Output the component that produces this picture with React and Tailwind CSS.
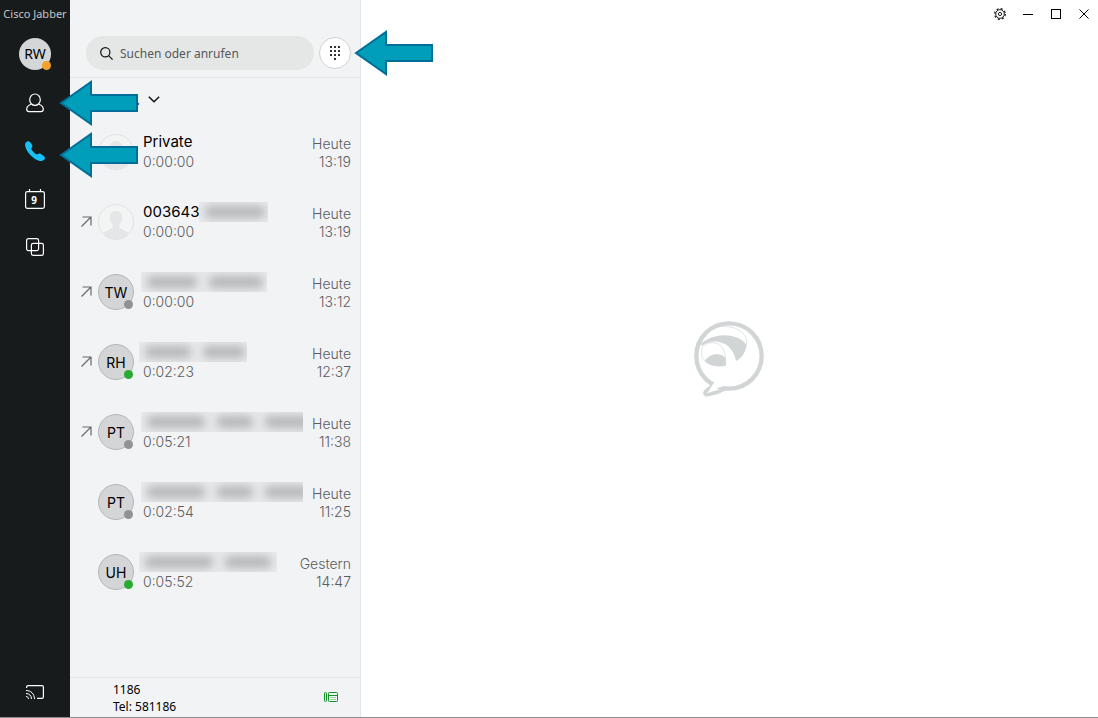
import React from 'react';
import clsx from 'clsx';

const calls = [
  { id: 1, name: 'Private', duration: '0:00:00', day: 'Heute', time: '13:19' },
  { id: 2, name: '003643', redacted: ['w-[60px]'], box: 'w-[69px]', outgoing: true, duration: '0:00:00', day: 'Heute', time: '13:19' },
  { id: 3, initials: 'TW', status: 'away', redacted: ['w-[50px]', 'w-[54px]'], box: 'w-[126px] -ml-0.5', outgoing: true, duration: '0:00:00', day: 'Heute', time: '13:12' },
  { id: 4, initials: 'RH', status: 'online', redacted: ['w-[46px]', 'w-[42px]'], box: 'w-[108px] -ml-1', outgoing: true, duration: '0:02:23', day: 'Heute', time: '12:37' },
  { id: 5, initials: 'PT', status: 'away', redacted: ['w-[58px]', 'w-[36px]', 'w-[46px]'], box: 'w-[162px] -ml-0.5', outgoing: true, duration: '0:05:21', day: 'Heute', time: '11:38' },
  { id: 6, initials: 'PT', status: 'away', redacted: ['w-[58px]', 'w-[36px]', 'w-[46px]'], box: 'w-[162px] -ml-0.5', duration: '0:02:54', day: 'Heute', time: '11:25' },
  { id: 7, initials: 'UH', status: 'online', redacted: ['w-[68px]', 'w-[46px]'], box: 'w-[138px] -ml-1', duration: '0:05:52', day: 'Gestern', time: '14:47' },
];

function Pointer({ className }) {
  return (
    <svg viewBox="0 0 80 46" className={clsx('absolute w-[80px] h-[46px] pointer-events-none', className)} aria-hidden="true">
      <path d="M2 23 32 2v13h46v16H32v13z" fill="#009eb8" stroke="#006e99" strokeWidth="2" />
    </svg>
  );
}

function NavButton({ label, children }) {
  return (
    <button type="button" aria-label={label} className="flex h-12 w-full items-center justify-center text-white">
      {children}
    </button>
  );
}

function Sidebar() {
  return (
    <nav className="flex w-[70px] shrink-0 flex-col bg-[#171b1c]">
      <div className="h-7 pt-1.5 text-center text-[11px] leading-4 whitespace-nowrap text-[#c4c6c6]">Cisco Jabber</div>
      <div className="flex h-[51px] items-center justify-center">
        <button type="button" className="relative flex h-8 w-8 items-center justify-center rounded-full bg-[#d4d6d7] text-sm text-black">
          RW
          <span className="absolute right-0 bottom-0 h-[9px] w-[9px] rounded-full bg-[#f4a12b]" />
        </button>
      </div>
      <NavButton label="Kontakte">
        <svg viewBox="0 0 20 20" className="h-5 w-5" fill="none" stroke="currentColor" strokeWidth="1.2">
          <ellipse cx="10" cy="6.7" rx="5.3" ry="5.7" />
          <path d="M6.2 11.2C3.6 12 1.7 13.6 1.7 16.2c0 1.7.8 2.4 2.4 2.4h11.8c1.6 0 2.4-.7 2.4-2.4 0-2.6-1.9-4.2-4.5-5" />
        </svg>
      </NavButton>
      <NavButton label="Anrufe">
        <svg viewBox="0 0 20 20" className="h-5 w-5" fill="#17c1f5">
          <path d="M1.2.9C2.6-.2 4.3 0 5.2 1.2L7 3.8c.7 1.1.5 2-.3 2.9-.6.7-.5 1.2 0 2 .9 1.5 2.7 3.3 4.2 4.3.8.5 1.3.6 2 .1 1-.7 2-.8 3-.1l2.9 1.9c1.4.9 1.5 2.6.4 3.8-1.2 1.3-3.2 1.7-5.3 1C7.6 17.6 1.9 11.5.3 5.5-.2 3.5.1 1.8 1.2.9z" />
        </svg>
      </NavButton>
      <NavButton label="Besprechungen">
        <svg viewBox="0 0 20 20" className="h-5 w-5" fill="none" stroke="currentColor" strokeWidth="1.2">
          <rect x=".6" y="2.6" width="18.8" height="16.8" rx="1.8" />
          <path d="M4.5 0v2.6M15.5 0v2.6" />
          <text x="9" y="14.5" textAnchor="middle" fontSize="10" fontWeight="700" fill="currentColor" stroke="none">9</text>
        </svg>
      </NavButton>
      <NavButton label="Fenster">
        <svg viewBox="0 0 18 18" className="h-[18px] w-[18px]" fill="none" stroke="currentColor" strokeWidth="1.2">
          <rect x=".6" y=".6" width="12" height="12" rx="1.8" />
          <rect x="5.4" y="5.4" width="12" height="12" rx="1.8" />
        </svg>
      </NavButton>
      <div className="mt-auto pb-px">
        <NavButton label="Bildschirm freigeben">
          <svg viewBox="0 0 18 14" className="h-[14px] w-[18px]" fill="none" stroke="currentColor" strokeWidth="1.2">
            <path d="M.6 3V2C.6 1.1 1.1.6 2 .6h14c.9 0 1.4.5 1.4 1.4v10c0 .9-.5 1.4-1.4 1.4h-5" />
            <path d="M0 5.5c5 0 8.500 3.500 8.500 8.500M0 8.500c3.300 0 5.500 2.200 5.500 5.500M0 11.500c1.500 0 2.500 1 2.500 2.500" strokeWidth="1" />
          </svg>
        </NavButton>
      </div>
    </nav>
  );
}

function Avatar({ initials, status }) {
  if (!initials) {
    return (
      <svg viewBox="0 0 36 36" className="h-9 w-9 shrink-0">
        <circle cx="18" cy="18" r="17.5" fill="#f3f4f4" stroke="#e0e1e2" />
        <path d="M18 7c4 0 6.2 2.6 6.2 6.5 0 3-1 5.3-2.7 7-.6 3.5 1 4.4 4.2 5.6 2.2.8 3.8 1.8 4.8 3.4A17 17 0 0 1 18 35 17 17 0 0 1 5.500 29.500c1-1.600 2.600-2.600 4.800-3.400 3.200-1.200 4.800-2.100 4.200-5.600-1.700-1.700-2.700-4-2.700-7C11.800 9.600 14 7 18 7z" fill="#e5e6e7" />
      </svg>
    );
  }
  return (
    <div className="relative flex h-9 w-9 shrink-0 items-center justify-center rounded-full border border-[#b4b6b8] bg-[#d4d5d7] text-[14px] font-normal text-black">
      {initials}
      <span
        className={clsx(
          'absolute right-0 bottom-0 h-[9px] w-[9px] rounded-full',
          status === 'online' ? 'bg-[#27ab30]' : 'bg-[#8f9395]'
        )}
      />
    </div>
  );
}

// Unkenntlich gemachter Name
function Redacted({ parts, box }) {
  return (
    <span className={clsx('flex h-5 items-center gap-3 overflow-hidden bg-[#e9eaeb] pl-1.5', box)}>
      {parts.map((width, i) => (
        <span key={i} className={clsx('h-3 shrink-0 rounded bg-[#b4b5b7] blur-[5px]', width)} />
      ))}
    </span>
  );
}

function CallRow({ call }) {
  return (
    <li className="flex h-[70px] items-center pr-[9px] pl-[11px] font-[Inter,sans-serif]">
      <div className="w-[17px] shrink-0 pb-0.5">
        {call.outgoing && (
          <svg viewBox="0 0 11 11" className="h-[11px] w-[11px]" fill="none" stroke="#66696b" strokeWidth="1.2">
            <path d="M.5 10.5 10 1M1.5 1H10v8.5" />
          </svg>
        )}
      </div>
      <Avatar initials={call.initials} status={call.status} />
      <div className="ml-[9px] min-w-0 flex-1 pb-px">
        <div className="flex h-[21px] items-center text-[15px] leading-5 text-black">
          {call.name}
          {call.redacted && <Redacted parts={call.redacted} box={call.box} />}
        </div>
        <div className="text-[14px] leading-5 font-[350] text-[#5a5c5e]">{call.duration}</div>
      </div>
      <div className="pt-0.5 text-right text-[14px] leading-[18px] font-[350] text-[#5a5c5e]">
        <div>{call.day}</div>
        <div>{call.time}</div>
      </div>
    </li>
  );
}

function CallPanel() {
  return (
    <section className="flex w-[291px] shrink-0 flex-col border-r border-[#e3e4e5] bg-[#f2f3f5]">
      <div className="flex h-[78px] items-end gap-[5px] border-b border-[#e5e6e8] pr-[9px] pb-[7px] pl-4">
        <label className="flex h-[34px] min-w-0 flex-1 items-center gap-[7px] rounded-full bg-[#e5e7e6] pl-[14px]">
          <svg viewBox="0 0 13 13" className="h-[13px] w-[13px] shrink-0" fill="none" stroke="#111" strokeWidth="1.2">
            <circle cx="5.3" cy="5.3" r="4.6" />
            <path d="m8.6 8.6 4 4" />
          </svg>
          <input type="text" aria-label="Suchen oder anrufen" placeholder="Suchen oder anrufen" className="w-full min-w-0 bg-transparent pt-0.5 text-[12px] leading-5 outline-none placeholder:text-[#555859]" />
        </label>
        <button type="button" aria-label="Wähltastatur" className="mb-px flex h-8 w-8 items-center justify-center rounded-full border border-[#cfd1d2] bg-white">
          <svg viewBox="0 0 10 14" className="h-[14px] w-[10px]" fill="#333">
            {[0, 4, 8].map((y) => [0, 4, 8].map((x) => <rect key={`${x}-${y}`} x={x} y={y} width="2" height="2" />))}
            <rect x="4" y="12" width="2" height="2" />
          </svg>
        </button>
      </div>
      <button type="button" className="flex h-[39px] items-center gap-2 pt-1.5 pl-4 text-left font-[Inter,sans-serif] text-[15px] text-[#111]">
        <span className="w-[54px] text-right font-medium">Alle ...</span>
        <svg viewBox="0 0 12 7" className="mb-0.5 h-[7px] w-3" fill="none" stroke="#111" strokeWidth="1.5">
          <path d="m.8.8 5.2 5 5.2-5" />
        </svg>
      </button>
      <ul>
        {calls.map((call) => (
          <CallRow key={call.id} call={call} />
        ))}
      </ul>
      <footer className="mt-auto flex h-10 items-center justify-between border-t border-[#e5e6e8] pr-[22px] pl-[43px] text-[12px] leading-[17px] text-black">
        <div>
          <div>1186</div>
          <div>Tel: 581186</div>
        </div>
        <button type="button" aria-label="Tischtelefon" className="pb-0.5">
          <svg viewBox="0 0 14 10" className="h-[10px] w-[14px]" fill="none" stroke="#16912a">
            <rect x=".5" y=".5" width="2" height="9" rx=".8" />
            <rect x="4.5" y=".5" width="9" height="9" rx=".8" />
            <path d="M4.5 3.5h9" />
            <path d="M6 5.5h6M6 7.5h6" stroke="#9fd0a8" />
          </svg>
        </button>
      </footer>
    </section>
  );
}

function JabberLogo() {
  return (
    <svg viewBox="42 32 213 228" className="h-[76px] w-[71px]" fill="none" aria-label="Jabber">
      <path d="M100 224c-6 8-15 9-23 20-6 8 2 11 12 8 18-4 34-10 48-18" stroke="#d2d5d6" strokeWidth="11" strokeLinejoin="round" />
      <circle cx="147" cy="137" r="98" stroke="#d2d5d6" strokeWidth="13" />
      <path d="M104 214 86 242l44-14 6-6z" fill="#fff" />
      <path d="M64 98C92 78 125 70 155 77c22 5 38 15 44 27-1 20-12 38-31 48-5-31-26-55-55-58-15-1-32 1-49 14z" fill="#d2d5d6" />
      <path d="M74 152c10-14 22-20 36-20 13 0 22 4 27 12v22c-24 5-47 2-63-14z" fill="#d2d5d6" />
      <path d="M88 58c32-16 74-12 97 7 16 13 19 34 10 51M66 114c-6 18 0 36 22 46M66 114c10-16 28-20 44-15 18 6 29 25 27 67" stroke="#d2d5d6" strokeWidth="2" />
    </svg>
  );
}

function MainArea() {
  return (
    <main className="flex min-w-0 flex-1 flex-col bg-white">
      <div className="flex h-7 justify-end text-black">
        <button type="button" aria-label="Einstellungen" className="flex w-7 items-center justify-center">
          <svg viewBox="0 0 12 12" className="h-3 w-3" fill="none" stroke="#222">
            <circle cx="6" cy="6" r="4.3" />
            <circle cx="6" cy="6" r="1.6" />
            <circle cx="6" cy="6" r="5.3" strokeWidth="1.3" strokeDasharray="2.08 2.08" />
          </svg>
        </button>
        <button type="button" aria-label="Minimieren" className="flex w-7 items-center justify-center">
          <span className="h-px w-2.5 bg-black" />
        </button>
        <button type="button" aria-label="Maximieren" className="flex w-7 items-center justify-center">
          <span className="h-2.5 w-2.5 border border-black" />
        </button>
        <button type="button" aria-label="Schließen" className="flex w-7 items-center justify-center">
          <svg viewBox="0 0 10 10" className="h-2.5 w-2.5" fill="none" stroke="currentColor">
            <path d="m.5.5 9 9M9.5.5l-9 9" />
          </svg>
        </button>
      </div>
      <div className="flex flex-1 items-center justify-center pb-7">
        <JabberLogo />
      </div>
    </main>
  );
}

function App() {
  return (
    <div className="relative flex min-h-screen border-b border-[#8b8d8e] font-['Noto_Sans',sans-serif]">
      <Sidebar />
      <CallPanel />
      <MainArea />
      {/* Hinweispfeile */}
      <Pointer className="top-[30px] left-[354px]" />
      <Pointer className="top-[80px] left-[59px]" />
      <Pointer className="top-[132px] left-[59px]" />
    </div>
  );
}

export default App;
